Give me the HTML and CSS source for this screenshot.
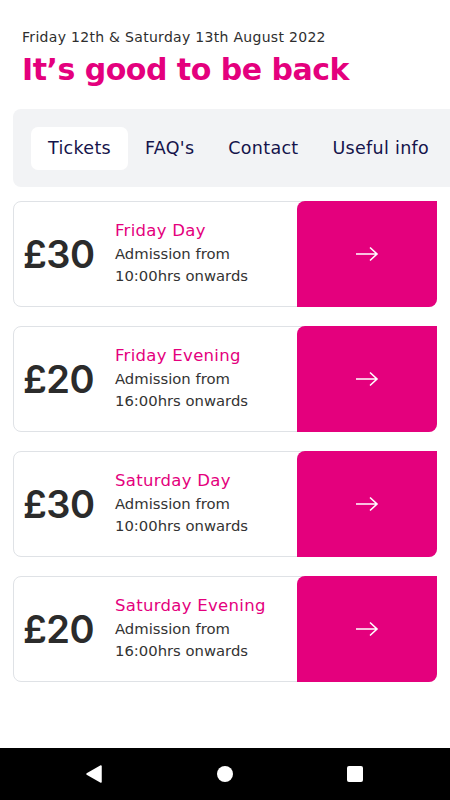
FILE: index.html
```html
<!DOCTYPE html>
<html lang="en">
<head>
    <meta charset="UTF-8">
    <title>Tickets</title>
    <link rel="stylesheet" href="styles.css">
</head>
<body>
<div id="page">
    <div id="header">
        <p class="date">Friday 12th &amp; Saturday 13th August 2022</p>
        <h1 class="title">It’s good to be back</h1>
    </div>

    <ul id="tab">
        <li class="selected">Tickets</li>
        <li>FAQ's</li>
        <li>Contact</li>
        <li>Useful info</li>
    </ul>

    <div id="tickets">
        <div class="ticket">
            <div class="price">£30</div>
            <div class="info">
                <div class="name">Friday Day</div>
                <div class="desc">Admission from<br>10:00hrs onwards</div>
            </div>
            <a class="go" href="#">
                <svg width="24" height="16" viewBox="0 0 24 16"><path d="M1 8H22M15 1.5L22 8L15 14.5" fill="none" stroke="#fff" stroke-width="1.6"/></svg>
            </a>
        </div>
        <div class="ticket">
            <div class="price">£20</div>
            <div class="info">
                <div class="name">Friday Evening</div>
                <div class="desc">Admission from<br>16:00hrs onwards</div>
            </div>
            <a class="go" href="#">
                <svg width="24" height="16" viewBox="0 0 24 16"><path d="M1 8H22M15 1.5L22 8L15 14.5" fill="none" stroke="#fff" stroke-width="1.6"/></svg>
            </a>
        </div>
        <div class="ticket">
            <div class="price">£30</div>
            <div class="info">
                <div class="name">Saturday Day</div>
                <div class="desc">Admission from<br>10:00hrs onwards</div>
            </div>
            <a class="go" href="#">
                <svg width="24" height="16" viewBox="0 0 24 16"><path d="M1 8H22M15 1.5L22 8L15 14.5" fill="none" stroke="#fff" stroke-width="1.6"/></svg>
            </a>
        </div>
        <div class="ticket">
            <div class="price">£20</div>
            <div class="info">
                <div class="name">Saturday Evening</div>
                <div class="desc">Admission from<br>16:00hrs onwards</div>
            </div>
            <a class="go" href="#">
                <svg width="24" height="16" viewBox="0 0 24 16"><path d="M1 8H22M15 1.5L22 8L15 14.5" fill="none" stroke="#fff" stroke-width="1.6"/></svg>
            </a>
        </div>
    </div>
</div>

<div id="navbar">
    <svg width="16" height="18" viewBox="0 0 16 18"><path d="M15 1V17L1 9Z" fill="#fff" stroke="#fff" stroke-linejoin="round" stroke-width="1.5"/></svg>
    <svg width="18" height="18" viewBox="0 0 18 18"><circle cx="9" cy="9" r="8" fill="#fff"/></svg>
    <svg width="18" height="18" viewBox="0 0 18 18"><rect x="1" y="1" width="16" height="16" rx="2" fill="#fff"/></svg>
</div>
</body>
</html>
```

FILE: styles.css
```css
*{
    margin: 0;
    padding: 0;
    box-sizing: border-box;
}
ul{
    list-style: none;
}
body{
    width: 450px;
    height: 800px;
    overflow: hidden;
    font-family: "DejaVu Sans", "Noto Sans", sans-serif;
    background: #fff;
    display: flex;
    flex-direction: column;
}
#page{
    flex: 1;
}
#header{
    padding: 27px 0 0 22px;
}
.date{
    font-size: 14px;
    line-height: 20px;
    color: #2e2e2e;
    letter-spacing: 0.3px;
}
.title{
    font-size: 30px;
    line-height: 46px;
    font-weight: bold;
    color: #e4007d;
    letter-spacing: -0.5px;
}
#tab{
    margin: 16px 0 0 13px;
    padding: 18px;
    height: 78px;
    background: #f2f3f5;
    border-radius: 8px 0 0 8px;
    display: flex;
    white-space: nowrap;
}
#tab li{
    height: 43px;
    line-height: 43px;
    padding: 0 17px;
    font-size: 17.5px;
    letter-spacing: 0.3px;
    color: #15144b;
    border-radius: 7px;
}
#tab li.selected{
    background: #fff;
}
#tickets{
    padding: 14px 13px 0;
    display: flex;
    flex-direction: column;
    gap: 19px;
}
.ticket{
    height: 106px;
    border: 1px solid #dfe2e6;
    border-radius: 8px;
    display: flex;
    align-items: center;
}
.price{
    width: 101px;
    padding-left: 9px;
    font-family: Inter, "DejaVu Sans", sans-serif;
    font-size: 38px;
    font-weight: 600;
    color: #2b2b2b;
    letter-spacing: -0.6px;
}
.info{
    flex: 1;
    font-size: 14.8px;
    line-height: 22.5px;
    color: #333;
}
.name{
    font-size: 16.5px;
    color: #e4007d;
    letter-spacing: 0.3px;
}
.go{
    align-self: stretch;
    width: 140px;
    margin: -1px -1px -1px 0;
    background: #e4007d;
    border-radius: 8px 0 8px 0;
    display: flex;
    align-items: center;
    justify-content: center;
}
#navbar{
    height: 52px;
    background: #000;
    display: flex;
    align-items: center;
    justify-content: center;
    gap: 112px;
}
#navbar svg:first-child{
    margin-right: 2px;
}
```
